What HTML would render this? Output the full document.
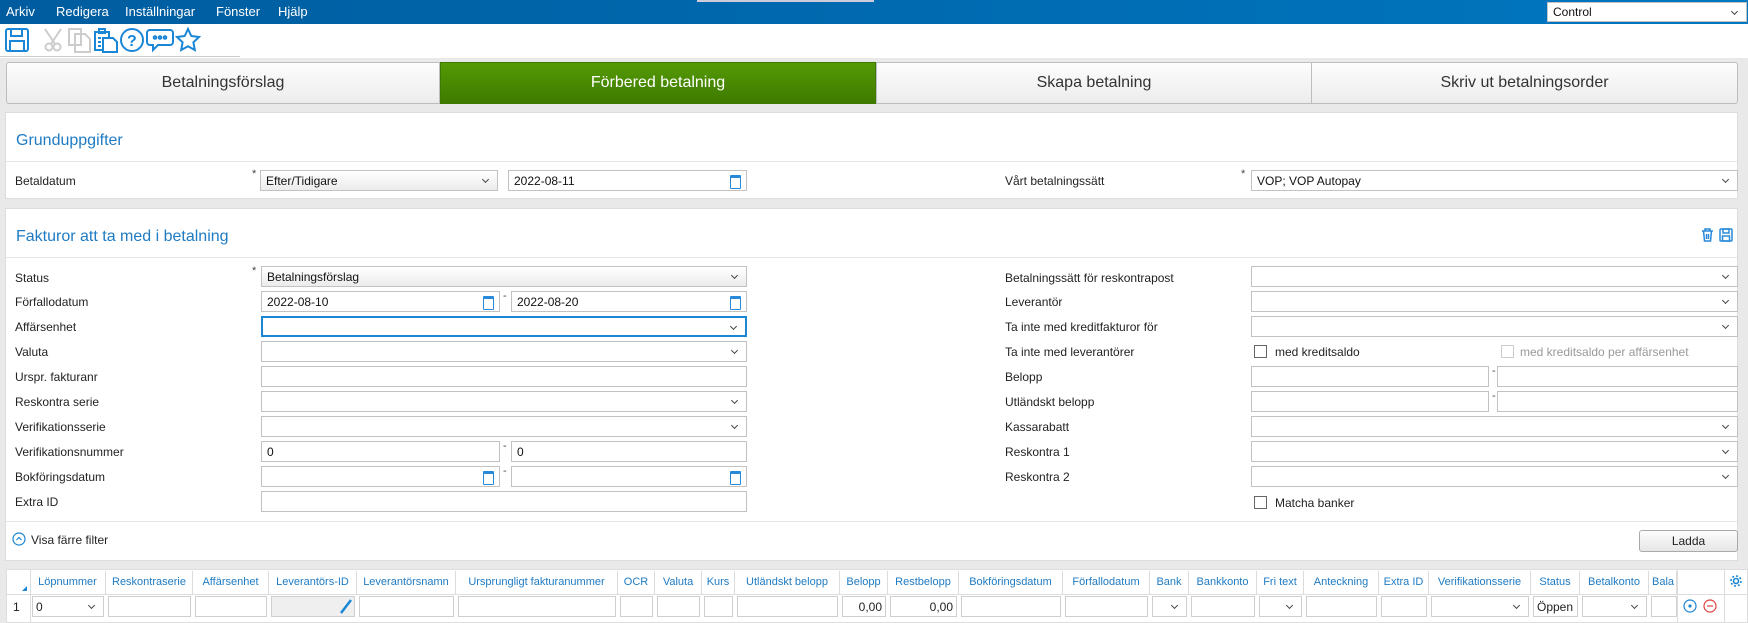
<!DOCTYPE html>
<html><head><meta charset="utf-8"><style>
*{box-sizing:border-box;margin:0;padding:0}
body{width:1748px;height:623px;overflow:hidden;background:#e9e9e9;font-family:"Liberation Sans",sans-serif;font-size:12px;color:#222;position:relative}
.a{position:absolute}
.menu{left:0;top:0;width:1748px;height:24px;background:linear-gradient(90deg,#005c9f,#0077c0);color:#fff;font-size:13px}
.menu span{position:absolute;top:4px}
.tb{left:0;top:24px;width:1748px;height:34px;background:#fff}
.tab{top:62px;height:42px;border:1px solid #bdbdbd;background:linear-gradient(#fdfdfd,#ececec);font-size:16px;display:flex;align-items:center;justify-content:center;color:#333}
.tab.on{background:linear-gradient(#559a05,#3e7a00);color:#fff;border-color:#3e7a00}
.panel{background:#fff;border:1px solid #ddd;left:5px;width:1733px}
.h{font-size:16px;color:#1e7bc4;left:10px}
.sep{left:0;width:100%;height:1px;background:#e6e6e6}
.lbl{font-size:12px;color:#222}
.in{height:21px;border:1px solid #c2c2c2;background:#fff;font-size:12px;padding:3px 5px;color:#111}
.sel{background:linear-gradient(#fff,#ececec)}
.dd::after{content:"";position:absolute;right:9px;top:6px;width:4px;height:4px;border-right:1px solid #444;border-bottom:1px solid #444;transform:rotate(45deg)}
.cal::after{content:"";position:absolute;right:5px;top:4px;width:9px;height:10px;border:1.5px solid #2a8ad8;border-top-width:3px;border-radius:1px}
.ast{font-size:11px;color:#444}
.dash{font-size:11px;color:#444}
.cb{width:13px;height:13px;border:1px solid #666;background:#fff}
.gh{top:571px;height:23px;font-size:11px;color:#1f7bc3;border-right:1px solid #dcdcdc;text-align:center;padding-top:5px;white-space:nowrap;overflow:hidden}
.gc{top:596px;height:21px;border:1px solid #cfcfcf;background:#fff;font-size:12px;padding:3px 3px}
</style></head><body>
<div class="a menu"><span style="left:6px">Arkiv</span><span style="left:56px">Redigera</span><span style="left:125px">Inställningar</span><span style="left:216px">Fönster</span><span style="left:278px">Hjälp</span></div>
<div class="a" style="left:697px;top:0;width:177px;height:2px;background:#ccd"></div>
<div class="a in dd" style="left:1547px;top:2px;width:200px;height:20px;padding:2px 5px">Control</div>
<div class="a tb"></div>
<div class="a" style="left:0;top:56px;width:240px;height:1px;background:#ccc"></div>
<svg class="a" style="left:4px;top:26px" width="230" height="28" viewBox="0 0 230 28" fill="none" stroke-width="2">
<g stroke="#1a86d6"><rect x="2" y="3" width="22" height="22" rx="2"/><rect x="7" y="3" width="11" height="7"/><rect x="6" y="15" width="14" height="10"/></g>
<g stroke="#ccc"><circle cx="45" cy="21" r="3.5"/><circle cx="53" cy="21" r="3.5"/><path d="M47 18 L57 3 M51 18 L41 3"/></g>
<g stroke="#ccc"><rect x="65" y="3" width="12" height="16"/><path d="M71 8 h10 l5 5 v13 h-15z"/></g>
<g stroke="#1a86d6"><path d="M91 6 h14 v18 h-14z"/><rect x="95" y="3" width="6" height="4"/><path d="M99 12 h10 l4 4 v10 h-14z" fill="#fff"/><path d="M94 12h3M94 16h3M94 20h3"/></g>
<g stroke="#1a86d6"><circle cx="128" cy="14" r="11"/></g><text x="123" y="20" fill="#1a86d6" font-size="16" font-family="Liberation Sans" font-weight="bold">?</text>
<g stroke="#1a86d6"><path d="M146 4 h20 a3 3 0 0 1 3 3 v9 a3 3 0 0 1 -3 3 h-12 l-5 5 v-5 h-3 a3 3 0 0 1 -3 -3 v-9 a3 3 0 0 1 3 -3z"/><circle cx="151" cy="11.5" r="1.3"/><circle cx="156" cy="11.5" r="1.3"/><circle cx="161" cy="11.5" r="1.3"/></g>
<path stroke="#1a86d6" d="M184 3 l3.3 7 7.7 1 -5.6 5.3 1.4 7.7 -6.8 -3.7 -6.8 3.7 1.4 -7.7 -5.6 -5.3 7.7 -1z"/>
</svg>
<div class="a tab" style="left:6px;width:434px;border-radius:3px 0 0 3px">Betalningsförslag</div>
<div class="a tab on" style="left:440px;width:436px">Förbered betalning</div>
<div class="a tab" style="left:876px;width:436px">Skapa betalning</div>
<div class="a tab" style="left:1311px;width:427px;border-radius:0 3px 3px 0">Skriv ut betalningsorder</div>

<div class="a panel" style="top:112px;height:87px">
<div class="a h" style="top:5px;line-height:46px">Grunduppgifter</div>
<div class="a sep" style="top:48px"></div>
</div>
<div class="a lbl" style="left:15px;top:174px">Betaldatum</div>
<div class="a ast" style="left:252px;top:168px">*</div>
<div class="a in sel dd" style="left:260px;top:170px;width:238px">Efter/Tidigare</div>
<div class="a in cal" style="left:508px;top:170px;width:239px">2022-08-11</div>
<div class="a lbl" style="left:1005px;top:174px">Vårt betalningssätt</div>
<div class="a ast" style="left:1241px;top:168px">*</div>
<div class="a in dd" style="left:1251px;top:170px;width:487px">VOP; VOP Autopay</div>

<div class="a panel" style="top:208px;height:353px">
<div class="a h" style="top:5px;line-height:46px">Fakturor att ta med i betalning</div>
<div class="a sep" style="top:48px"></div>
<div class="a sep" style="top:312px"></div>
</div>
<svg class="a" style="left:1699px;top:227px" width="36" height="16" fill="none" stroke="#2a8ad8" stroke-width="1.5"><path d="M3 4h11M6 4V2h5v2M4.5 4l1 10h6l1-10M7.5 7v5M9.5 7v5"/><rect x="21" y="2" width="12" height="12" rx="1"/><rect x="24" y="2" width="6" height="4"/><rect x="23.5" y="9" width="7" height="5"/></svg>

<div class="a lbl" style="left:15px;top:271px">Status</div><div class="a ast" style="left:252px;top:265px">*</div>
<div class="a in sel dd" style="left:261px;top:266px;width:486px">Betalningsförslag</div>
<div class="a lbl" style="left:15px;top:295px">Förfallodatum</div>
<div class="a in cal" style="left:261px;top:291px;width:239px">2022-08-10</div><div class="a dash" style="left:503px;top:290px">-</div>
<div class="a in cal" style="left:511px;top:291px;width:236px">2022-08-20</div>
<div class="a lbl" style="left:15px;top:320px">Affärsenhet</div>
<div class="a in dd" style="left:261px;top:316px;width:486px;border:2px solid #1a86d6"></div>
<div class="a lbl" style="left:15px;top:345px">Valuta</div>
<div class="a in dd" style="left:261px;top:341px;width:486px"></div>
<div class="a lbl" style="left:15px;top:370px">Urspr. fakturanr</div>
<div class="a in" style="left:261px;top:366px;width:486px"></div>
<div class="a lbl" style="left:15px;top:395px">Reskontra serie</div>
<div class="a in dd" style="left:261px;top:391px;width:486px"></div>
<div class="a lbl" style="left:15px;top:420px">Verifikationsserie</div>
<div class="a in dd" style="left:261px;top:416px;width:486px"></div>
<div class="a lbl" style="left:15px;top:445px">Verifikationsnummer</div>
<div class="a in" style="left:261px;top:441px;width:239px">0</div><div class="a dash" style="left:503px;top:440px">-</div>
<div class="a in" style="left:511px;top:441px;width:236px">0</div>
<div class="a lbl" style="left:15px;top:470px">Bokföringsdatum</div>
<div class="a in cal" style="left:261px;top:466px;width:239px"></div><div class="a dash" style="left:503px;top:465px">-</div>
<div class="a in cal" style="left:511px;top:466px;width:236px"></div>
<div class="a lbl" style="left:15px;top:495px">Extra ID</div>
<div class="a in" style="left:261px;top:491px;width:486px"></div>

<div class="a lbl" style="left:1005px;top:271px">Betalningssätt för reskontrapost</div>
<div class="a in dd" style="left:1251px;top:266px;width:487px"></div>
<div class="a lbl" style="left:1005px;top:295px">Leverantör</div>
<div class="a in dd" style="left:1251px;top:291px;width:487px"></div>
<div class="a lbl" style="left:1005px;top:320px">Ta inte med kreditfakturor för</div>
<div class="a in dd" style="left:1251px;top:316px;width:487px"></div>
<div class="a lbl" style="left:1005px;top:345px">Ta inte med leverantörer</div>
<div class="a cb" style="left:1254px;top:345px"></div><div class="a lbl" style="left:1275px;top:345px">med kreditsaldo</div>
<div class="a cb" style="left:1501px;top:345px;border-color:#ccc"></div><div class="a lbl" style="left:1520px;top:345px;color:#999">med kreditsaldo per affärsenhet</div>
<div class="a lbl" style="left:1005px;top:370px">Belopp</div>
<div class="a in" style="left:1251px;top:366px;width:238px"></div><div class="a dash" style="left:1492px;top:365px">-</div>
<div class="a in" style="left:1497px;top:366px;width:241px"></div>
<div class="a lbl" style="left:1005px;top:395px">Utländskt belopp</div>
<div class="a in" style="left:1251px;top:391px;width:238px"></div><div class="a dash" style="left:1492px;top:390px">-</div>
<div class="a in" style="left:1497px;top:391px;width:241px"></div>
<div class="a lbl" style="left:1005px;top:420px">Kassarabatt</div>
<div class="a in dd" style="left:1251px;top:416px;width:487px"></div>
<div class="a lbl" style="left:1005px;top:445px">Reskontra 1</div>
<div class="a in dd" style="left:1251px;top:441px;width:487px"></div>
<div class="a lbl" style="left:1005px;top:470px">Reskontra 2</div>
<div class="a in dd" style="left:1251px;top:466px;width:487px"></div>
<div class="a cb" style="left:1254px;top:496px"></div><div class="a lbl" style="left:1275px;top:496px">Matcha banker</div>

<svg class="a" style="left:12px;top:532px" width="14" height="14" fill="none" stroke="#1a86d6" stroke-width="1.2"><circle cx="7" cy="7" r="6"/><path d="M4.5 8 L7 5.5 9.5 8"/></svg>
<div class="a lbl" style="left:31px;top:533px">Visa färre filter</div>
<div class="a" style="left:1639px;top:530px;width:99px;height:22px;border:1px solid #aaa;border-radius:3px;background:linear-gradient(#fdfdfd,#e6e6e6);font-size:12px;text-align:center;line-height:20px">Ladda</div>

<div class="a" style="left:6px;top:569px;width:1742px;height:54px;background:#fff;border:1px solid #ddd"></div>
<div class="a" style="left:6px;top:594px;width:1742px;height:1px;background:#ddd"></div>
<div class="a" style="left:30px;top:570px;width:1px;height:53px;background:#ddd"></div>
<div class="a" style="left:22px;top:586px;width:0;height:0;border-left:5px solid transparent;border-bottom:5px solid #1a86d6"></div>
<div class="a gh" style="left:30px;width:76px">Löpnummer</div>
<div class="a gh" style="left:106px;width:87px">Reskontraserie</div>
<div class="a gh" style="left:193px;width:76px">Affärsenhet</div>
<div class="a gh" style="left:269px;width:88px">Leverantörs-ID</div>
<div class="a gh" style="left:357px;width:99px">Leverantörsnamn</div>
<div class="a gh" style="left:456px;width:162px">Ursprungligt fakturanummer</div>
<div class="a gh" style="left:618px;width:37px">OCR</div>
<div class="a gh" style="left:655px;width:47px">Valuta</div>
<div class="a gh" style="left:702px;width:33px">Kurs</div>
<div class="a gh" style="left:735px;width:105px">Utländskt belopp</div>
<div class="a gh" style="left:840px;width:48px">Belopp</div>
<div class="a gh" style="left:888px;width:71px">Restbelopp</div>
<div class="a gh" style="left:959px;width:104px">Bokföringsdatum</div>
<div class="a gh" style="left:1063px;width:87px">Förfallodatum</div>
<div class="a gh" style="left:1150px;width:39px">Bank</div>
<div class="a gh" style="left:1189px;width:68px">Bankkonto</div>
<div class="a gh" style="left:1257px;width:47px">Fri text</div>
<div class="a gh" style="left:1304px;width:75px">Anteckning</div>
<div class="a gh" style="left:1379px;width:50px">Extra ID</div>
<div class="a gh" style="left:1429px;width:102px">Verifikationsserie</div>
<div class="a gh" style="left:1531px;width:49px">Status</div>
<div class="a gh" style="left:1580px;width:69px">Betalkonto</div>
<div class="a gh" style="left:1649px;width:28px;text-align:left;padding-left:3px">Bala</div>
<div class="a" style="left:1677px;top:570px;width:1px;height:53px;background:#ddd"></div>
<div class="a" style="left:1724px;top:570px;width:1px;height:53px;background:#ddd"></div>
<svg class="a" style="left:1729px;top:574px" width="14" height="14" fill="none" stroke="#1a86d6" stroke-width="1.6"><circle cx="7" cy="7" r="2.5"/><circle cx="7" cy="7" r="5" stroke-dasharray="2 1.9"/></svg>
<div class="a" style="left:13px;top:600px;font-size:12px">1</div>
<div class="a gc dd" style="left:32px;width:72px">0</div>
<div class="a gc" style="left:108px;width:83px"></div>
<div class="a gc" style="left:195px;width:72px"></div>
<div class="a gc" style="left:271px;width:84px;background:#efefef"></div>
<svg class="a" style="left:339px;top:598px" width="14" height="16"><path d="M2 15 L12 2" stroke="#1a86d6" stroke-width="2.5"/></svg>
<div class="a gc" style="left:359px;width:95px"></div>
<div class="a gc" style="left:458px;width:158px"></div>
<div class="a gc" style="left:620px;width:33px"></div>
<div class="a gc" style="left:657px;width:43px"></div>
<div class="a gc" style="left:704px;width:29px"></div>
<div class="a gc" style="left:737px;width:101px"></div>
<div class="a gc" style="left:842px;width:44px;text-align:right">0,00</div>
<div class="a gc" style="left:890px;width:67px;text-align:right">0,00</div>
<div class="a gc" style="left:961px;width:100px"></div>
<div class="a gc" style="left:1065px;width:83px"></div>
<div class="a gc dd" style="left:1152px;width:35px"></div>
<div class="a gc" style="left:1191px;width:64px"></div>
<div class="a gc dd" style="left:1259px;width:43px"></div>
<div class="a gc" style="left:1306px;width:71px"></div>
<div class="a gc" style="left:1381px;width:46px"></div>
<div class="a gc dd" style="left:1431px;width:98px"></div>
<div class="a gc" style="left:1533px;width:45px">Öppen</div>
<div class="a gc dd" style="left:1582px;width:65px"></div>
<div class="a gc" style="left:1651px;width:26px"></div>
<svg class="a" style="left:1683px;top:599px" width="38" height="14" fill="none" stroke-width="1.2"><circle cx="7" cy="7" r="6" stroke="#1a86d6"/><circle cx="7" cy="7" r="1.6" fill="#1a86d6" stroke="none"/><circle cx="27" cy="7" r="6" stroke="#e04040"/><path d="M24 7h6" stroke="#e04040"/></svg>
</body></html>
